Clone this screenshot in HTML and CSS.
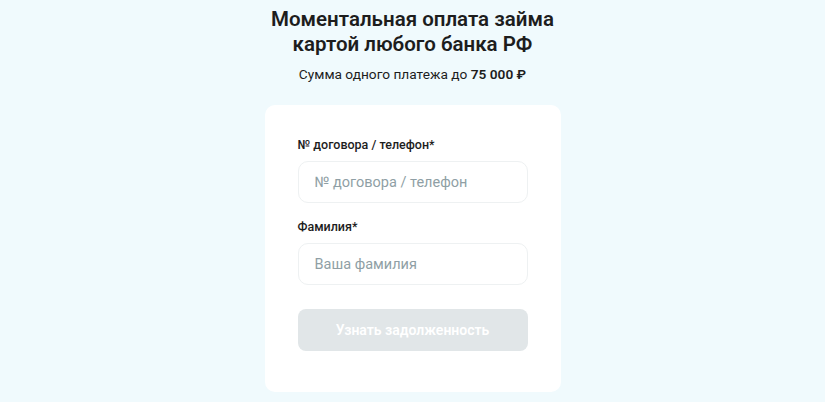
FILE: index.html
```html
<!DOCTYPE html>
<html lang="ru">
<head>
<meta charset="utf-8">
<link rel="stylesheet" href="styles.css">
</head>
<body>
<main class="page">
  <h1 class="title">Моментальная оплата займа<br>картой любого банка РФ</h1>
  <p class="subtitle">Сумма одного платежа до <b>75 000 ₽</b></p>
  <form class="card">
    <label class="label" for="num">№ договора / телефон*</label>
    <input class="input" id="num" type="text" placeholder="№ договора / телефон">
    <label class="label" for="name">Фамилия*</label>
    <input class="input input-last" id="name" type="text" placeholder="Ваша фамилия">
    <button class="button" type="button" disabled>Узнать задолженность</button>
  </form>
</main>
</body>
</html>
```
FILE: styles.css
```css
html, body {
  margin: 0;
  padding: 0;
  background: #f0fafd;
  font-family: Roboto, "Noto Sans", sans-serif;
  color: #1d1d1d;
}
.page {
  display: flex;
  flex-direction: column;
  align-items: center;
  padding-top: 7px;
}
.title {
  margin: 0;
  font-size: 20.5px;
  line-height: 25px;
  font-weight: 600;
  text-align: center;
}
.subtitle {
  margin: 8px 0 0;
  font-size: 13.7px;
  line-height: 18px;
}
.subtitle b {
  font-weight: 600;
}
.card {
  margin-top: 22px;
  width: 296px;
  box-sizing: border-box;
  background: #fff;
  border-radius: 10px;
  padding: 32px 33px 41px;
  display: flex;
  flex-direction: column;
}
.label {
  font-size: 12.5px;
  line-height: 16px;
  font-weight: 500;
  margin-bottom: 8px;
}
.input {
  height: 42px;
  box-sizing: border-box;
  border: 1px solid #eef1f2;
  border-radius: 10px;
  padding: 0 16px;
  font: inherit;
  font-size: 14.5px;
  color: #1d1d1d;
  background: #fff;
  margin-bottom: 16px;
  outline: none;
}
.input::placeholder {
  color: #8f9fa5;
}
.input-last {
  margin-bottom: 24px;
}
.button {
  height: 42px;
  border: none;
  border-radius: 8px;
  background: #e1e6e8;
  color: #fff;
  font: inherit;
  font-size: 14px;
  font-weight: 600;
}
```
